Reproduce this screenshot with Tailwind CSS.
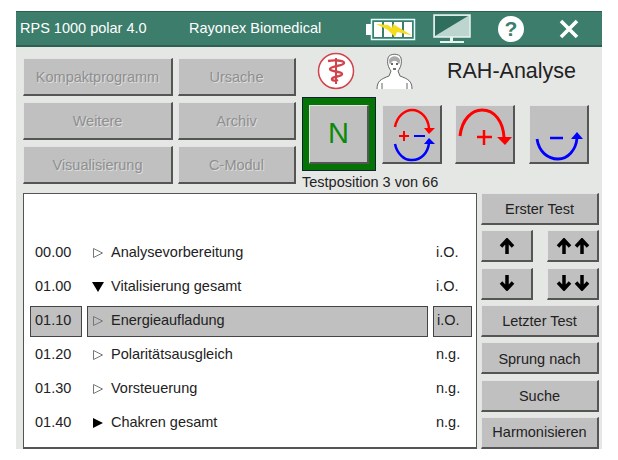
<!DOCTYPE html>
<html lang="en">
<head>
    <meta charset="UTF-8">
    <title>RPS 1000 polar</title>
    <script src="https://cdn.jsdelivr.net/npm/@tailwindcss/browser@4"></script>
</head>
<body class="bg-white font-['Liberation_Sans',Arial,sans-serif]">
<div class="pt-[11px] pl-[16px]">
    <div class="w-[586px] h-[438px] bg-[#e5e7e5] flex flex-col">

        <!-- Title bar -->
        <header class="h-[36px] bg-[#3c7d6b] border-t-[1px] border-b-[2px] border-[#2f5f52] flex items-center text-white text-[14.5px] pl-[4px]">
            <span class="w-[169px] pt-[1px]">RPS 1000 polar 4.0</span>
            <span class="w-[177px] pt-[1px]">Rayonex Biomedical</span>
            <svg class="w-[50px] h-[26px]" viewBox="0 0 50 26">
                <rect x="0" y="8" width="5" height="11" fill="#fff"/>
                <rect x="5.500" y="3.500" width="43" height="20" fill="none" stroke="#dff" stroke-width="1.500"/>
                <rect x="8" y="6" width="8" height="15" fill="#fff"/>
                <rect x="18" y="6" width="8" height="15" fill="#fff"/>
                <rect x="28" y="6" width="8" height="15" fill="#fff"/>
                <rect x="38" y="6" width="8" height="15" fill="#fff"/>
                <path d="M10 8 L22 9 L26 12 L27 8 L46 19.500 L31 16 L29 21 L22 14 Z" fill="#f5dc1e"/>
            </svg>
            <svg class="ml-[17px] w-[38px] h-[30px]" viewBox="0 0 38 30">
                <rect x="1" y="1" width="36" height="22" fill="#bcd6cf" stroke="#e8f2ef" stroke-width="1.500"/>
                <path d="M2 22 L2 2 L35 2 Z" fill="#2f6d5c"/>
                <rect x="17" y="23" width="3" height="4" fill="#e8f2ef"/>
                <rect x="7" y="27" width="24" height="2" fill="#e8f2ef"/>
            </svg>
            <div class="ml-[27px] w-[26px] h-[26px] rounded-full bg-white text-[#3c7d6b] font-bold text-[21px] flex items-center justify-center">?</div>
            <svg class="ml-[35px] w-[20px] h-[20px]" viewBox="0 0 20 20">
                <path d="M2 2 L18 18 M18 2 L2 18" stroke="#fff" stroke-width="3.600" fill="none"/>
            </svg>
        </header>

        <!-- Upper area -->
        <section class="flex pl-[7px] h-[146px]">
            <div class="grid grid-cols-[150px_118px] grid-rows-[38px_38px_38px] gap-x-[5px] gap-y-[6px] mt-[11px] h-[126px] text-[14.5px] text-[#8f8f8f] [text-shadow:1px_1px_0_#dedede]">
                <div class="pt-[3px] bg-[#c0c0c0] border-t border-l border-[#e4e4e4] border-r-2 border-b-2 border-r-[#555] border-b-[#555] flex items-center justify-center">Kompaktprogramm</div>
                <div class="pt-[3px] bg-[#c0c0c0] border-t border-l border-[#e4e4e4] border-r-2 border-b-2 border-r-[#555] border-b-[#555] flex items-center justify-center">Ursache</div>
                <div class="pt-[3px] bg-[#c0c0c0] border-t border-l border-[#e4e4e4] border-r-2 border-b-2 border-r-[#555] border-b-[#555] flex items-center justify-center">Weitere</div>
                <div class="pt-[3px] bg-[#c0c0c0] border-t border-l border-[#e4e4e4] border-r-2 border-b-2 border-r-[#555] border-b-[#555] flex items-center justify-center">Archiv</div>
                <div class="pt-[3px] bg-[#c0c0c0] border-t border-l border-[#e4e4e4] border-r-2 border-b-2 border-r-[#555] border-b-[#555] flex items-center justify-center">Visualisierung</div>
                <div class="pt-[3px] bg-[#c0c0c0] border-t border-l border-[#e4e4e4] border-r-2 border-b-2 border-r-[#555] border-b-[#555] flex items-center justify-center">C-Modul</div>
            </div>

            <div class="ml-[6px] flex flex-col">
                <!-- Symbols and title -->
                <div class="h-[50px] flex items-center">
                    <svg class="ml-[15px] w-[38px] h-[38px] mt-[-3px]" viewBox="0 0 38 38">
                        <circle cx="19" cy="19" r="17.500" fill="#fff" stroke="#d2444c" stroke-width="1.500"/>
                        <path d="M19 6 V32" stroke="#d2444c" stroke-width="2" fill="none"/>
                        <path d="M11 9 C16 8 27 8 27 11 C27 14 13 14 13 17 C13 20 25 19 25 22 C25 25 15 24 15 27 C15 29 19 29 21 28" stroke="#d2444c" stroke-width="2.400" fill="none"/>
                    </svg>
                    <svg class="ml-[21px] w-[38px] h-[38px] mt-[-2px]" viewBox="0 0 38 38">
                        <path d="M1 37 C1 29 5 27 13 24 L15 19 C12 15 11 11 12 6 C13 1 24 1 25 6 C26 11 25 15 22 19 L24 24 C32 27 36 29 36 37" fill="#fff" stroke="#666" stroke-width="1"/>
                        <path d="M13 8 C15 3 22 3 24 8 C24 12 23 13 22 11 C20 8 17 8 15 11 C14 13 13 12 13 8 Z" fill="#aaa"/>
                        <circle cx="16" cy="12" r="1" fill="#333"/>
                        <circle cx="21" cy="12" r="1" fill="#333"/>
                        <path d="M17 17 H20" stroke="#333" stroke-width="1.400"/>
                        <path d="M6 37 V31 M31 37 V31" stroke="#666" stroke-width="1"/>
                    </svg>
                    <span class="ml-[33px] text-[21.500px] text-[#222] mt-[-2px]">RAH-Analyse</span>
                </div>

                <!-- Polarity buttons -->
                <div class="flex items-start h-[74px]">
                    <div class="w-[74px] h-[74px] bg-[#067306] border border-[#123] flex items-center justify-center">
                        <div class="w-[60px] h-[59px] bg-[#c0c0c0] border-t border-l border-[#e4e4e4] border-r-2 border-b-2 border-r-[#555] border-b-[#555] flex items-center justify-center text-[#0a8a0a] text-[29px]">N</div>
                    </div>
                    <div class="ml-[6px] mt-[8px] w-[60px] h-[59px] bg-[#c0c0c0] border-t border-l border-[#e4e4e4] border-r-2 border-b-2 border-r-[#555] border-b-[#555]">
                        <svg class="w-[57px] h-[56px]" viewBox="0 0 57 56">
                            <path d="M12 21 C14 10 22 4 29 4 C38 4 45 12 46 22" fill="none" stroke="#f00" stroke-width="2.500"/>
                            <path d="M41 22 H52 L46 28 Z" fill="#f00"/>
                            <path d="M16 30 H26 M21 25 V35" stroke="#f00" stroke-width="2"/>
                            <path d="M31 30 H42" stroke="#00f" stroke-width="2"/>
                            <path d="M12 38 C14 48 22 55 29 54 C39 54 45 46 46 37" fill="none" stroke="#00f" stroke-width="2.500"/>
                            <path d="M41 38 H52 L46 32 Z" fill="#00f"/>
                        </svg>
                    </div>
                    <div class="ml-[13px] mt-[8px] w-[60px] h-[59px] bg-[#c0c0c0] border-t border-l border-[#e4e4e4] border-r-2 border-b-2 border-r-[#555] border-b-[#555]">
                        <svg class="w-[57px] h-[56px]" viewBox="0 0 57 56">
                            <path d="M4 30 C6 13 16 4 26 4 C39 4 47 16 48 31" fill="none" stroke="#f00" stroke-width="3"/>
                            <path d="M41 31 H56 L49 39 Z" fill="#f00"/>
                            <path d="M21 31 H36 M28 24 V39" stroke="#f00" stroke-width="2.500"/>
                        </svg>
                    </div>
                    <div class="ml-[14px] mt-[8px] w-[60px] h-[59px] bg-[#c0c0c0] border-t border-l border-[#e4e4e4] border-r-2 border-b-2 border-r-[#555] border-b-[#555]">
                        <svg class="w-[57px] h-[56px]" viewBox="0 0 57 56">
                            <path d="M7 33 C9 46 18 53 28 53 C38 53 46 44 47 32" fill="none" stroke="#00f" stroke-width="2.800"/>
                            <path d="M41 33 H53 L47 26 Z" fill="#00f"/>
                            <path d="M20 32 H33" stroke="#00f" stroke-width="2.500"/>
                        </svg>
                    </div>
                </div>
                <div class="text-[14.500px] leading-[20px] pt-[1px] text-[#222]">Testposition 3 von 66</div>
            </div>
        </section>

        <!-- Lower area -->
        <section class="flex pl-[7px] flex-1 min-h-0">
            <div class="w-[454px] h-[256px] bg-white border border-[#555] border-b-2 pt-[42px] text-[14.5px] text-[#222]">
                <div class="flex items-center h-[34px]">
                    <span class="ml-[11px] w-[57px]">00.00</span>
                    <svg class="w-[12px] h-[12px]" viewBox="0 0 12 12"><path d="M1.500 1.500 L10.500 6 L1.500 10.500 Z" fill="none" stroke="#777" stroke-width="1"/></svg>
                    <span class="ml-[7px] w-[325px]">Analysevorbereitung</span>
                    <span>i.O.</span>
                </div>
                <div class="flex items-center h-[34px]">
                    <span class="ml-[11px] w-[57px]">01.00</span>
                    <svg class="w-[12px] h-[12px]" viewBox="0 0 12 12"><path d="M0 1 H12 L6 11 Z" fill="#000"/></svg>
                    <span class="ml-[7px] w-[325px]">Vitalisierung gesamt</span>
                    <span>i.O.</span>
                </div>
                <div class="flex items-center h-[34px] pl-[6px]">
                    <div class="w-[52px] h-[31px] bg-[#c0c0c0] border border-[#444] flex items-center pl-[4px]">01.10</div>
                    <div class="ml-[5px] w-[341px] h-[31px] bg-[#c0c0c0] border border-[#444] flex items-center pl-[4px]">
                        <svg class="w-[12px] h-[12px]" viewBox="0 0 12 12"><path d="M1.500 1.500 L10.500 6 L1.500 10.500 Z" fill="none" stroke="#777" stroke-width="1"/></svg>
                        <span class="ml-[7px]">Energieaufladung</span>
                    </div>
                    <div class="ml-[5px] w-[39px] h-[31px] bg-[#c0c0c0] border border-[#444] flex items-center pl-[3px]">i.O.</div>
                </div>
                <div class="flex items-center h-[34px]">
                    <span class="ml-[11px] w-[57px]">01.20</span>
                    <svg class="w-[12px] h-[12px]" viewBox="0 0 12 12"><path d="M1.500 1.500 L10.500 6 L1.500 10.500 Z" fill="none" stroke="#777" stroke-width="1"/></svg>
                    <span class="ml-[7px] w-[325px]">Polaritätsausgleich</span>
                    <span>n.g.</span>
                </div>
                <div class="flex items-center h-[34px]">
                    <span class="ml-[11px] w-[57px]">01.30</span>
                    <svg class="w-[12px] h-[12px]" viewBox="0 0 12 12"><path d="M1.500 1.500 L10.500 6 L1.500 10.500 Z" fill="none" stroke="#777" stroke-width="1"/></svg>
                    <span class="ml-[7px] w-[325px]">Vorsteuerung</span>
                    <span>n.g.</span>
                </div>
                <div class="flex items-center h-[34px]">
                    <span class="ml-[11px] w-[57px]">01.40</span>
                    <svg class="w-[12px] h-[12px]" viewBox="0 0 12 12"><path d="M1 1 L11 6 L1 11 Z" fill="#000"/></svg>
                    <span class="ml-[7px] w-[325px]">Chakren gesamt</span>
                    <span>n.g.</span>
                </div>
            </div>

            <!-- Navigation buttons -->
            <div class="ml-[4px] w-[118px] flex flex-col gap-[5.500px] text-[14.5px] text-[#222]">
                <div class="h-[32px] pt-[3px] bg-[#c0c0c0] border-t border-l border-[#e4e4e4] border-r-2 border-b-2 border-r-[#555] border-b-[#555] flex items-center justify-center">Erster Test</div>
                <div class="h-[32px] flex justify-between">
                    <div class="w-[52px] bg-[#c0c0c0] border-t border-l border-[#e4e4e4] border-r-2 border-b-2 border-r-[#555] border-b-[#555] flex items-center justify-center">
                        <svg class="w-[16px] h-[16px]" viewBox="0 0 16 16"><path d="M8 16 V2 M2 8.500 L8 2 L14 8.500" fill="none" stroke="#000" stroke-width="3.500"/></svg>
                    </div>
                    <div class="w-[52px] bg-[#c0c0c0] border-t border-l border-[#e4e4e4] border-r-2 border-b-2 border-r-[#555] border-b-[#555] flex items-center justify-center">
                        <svg class="w-[34px] h-[16px]" viewBox="0 0 34 16"><path d="M8 16 V2 M2 8.500 L8 2 L14 8.500 M26 16 V2 M20 8.500 L26 2 L32 8.500" fill="none" stroke="#000" stroke-width="3.500"/></svg>
                    </div>
                </div>
                <div class="h-[32px] flex justify-between">
                    <div class="w-[52px] bg-[#c0c0c0] border-t border-l border-[#e4e4e4] border-r-2 border-b-2 border-r-[#555] border-b-[#555] flex items-center justify-center">
                        <svg class="w-[16px] h-[16px]" viewBox="0 0 16 16"><path d="M8 0 V14 M2 7.500 L8 14 L14 7.500" fill="none" stroke="#000" stroke-width="3.500"/></svg>
                    </div>
                    <div class="w-[52px] bg-[#c0c0c0] border-t border-l border-[#e4e4e4] border-r-2 border-b-2 border-r-[#555] border-b-[#555] flex items-center justify-center">
                        <svg class="w-[34px] h-[16px]" viewBox="0 0 34 16"><path d="M8 0 V14 M2 7.500 L8 14 L14 7.500 M26 0 V14 M20 7.500 L26 14 L32 7.500" fill="none" stroke="#000" stroke-width="3.500"/></svg>
                    </div>
                </div>
                <div class="h-[32px] pt-[3px] bg-[#c0c0c0] border-t border-l border-[#e4e4e4] border-r-2 border-b-2 border-r-[#555] border-b-[#555] flex items-center justify-center">Letzter Test</div>
                <div class="h-[32px] pt-[3px] bg-[#c0c0c0] border-t border-l border-[#e4e4e4] border-r-2 border-b-2 border-r-[#555] border-b-[#555] flex items-center justify-center">Sprung nach</div>
                <div class="h-[32px] pt-[3px] bg-[#c0c0c0] border-t border-l border-[#e4e4e4] border-r-2 border-b-2 border-r-[#555] border-b-[#555] flex items-center justify-center">Suche</div>
                <div class="h-[32px] pt-[1px] bg-[#c0c0c0] border-t border-l border-[#e4e4e4] border-r-2 border-b-2 border-r-[#555] border-b-[#555] flex items-center justify-center">Harmonisieren</div>
            </div>
        </section>
    </div>
</div>
</body>
</html>
